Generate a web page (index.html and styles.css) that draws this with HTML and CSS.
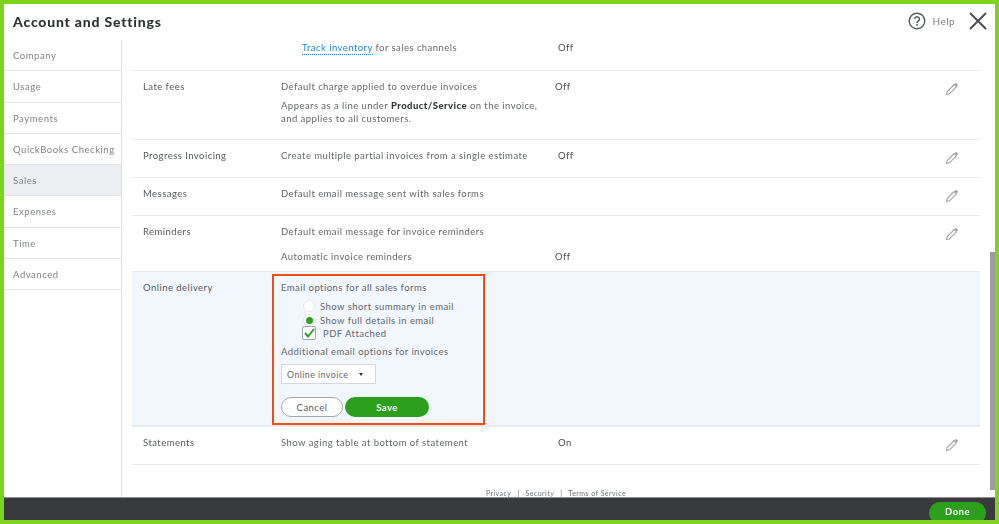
FILE: index.html
```html
<!DOCTYPE html>
<html lang="en">
<head>
<meta charset="utf-8">
<title>Account and Settings</title>
<link rel="stylesheet" href="styles.css">
</head>
<body>
<div class="frame">
  <header class="top">
    <h1 class="title">Account and Settings</h1>
    <div class="top-actions">
      <svg class="help-icon" width="18" height="18" viewBox="0 0 18 18"><circle cx="9" cy="9" r="7.8" fill="none" stroke="#555a60" stroke-width="1.4"/><path d="M6.6 7.1a2.4 2.4 0 1 1 3.6 2.1c-.8.5-1.2.9-1.2 1.7" fill="none" stroke="#555a60" stroke-width="1.4"/><circle cx="9" cy="13" r=".9" fill="#555a60"/></svg>
      <span class="help-text">Help</span>
      <svg class="close-icon" width="18" height="18" viewBox="0 0 18 18"><path d="M1 1l16 16M17 1L1 17" stroke="#4a4f55" stroke-width="2" fill="none"/></svg>
    </div>
  </header>
  <div class="main">
    <nav class="side">
      <div class="side-item">Company</div>
      <div class="side-item">Usage</div>
      <div class="side-item">Payments</div>
      <div class="side-item">QuickBooks Checking</div>
      <div class="side-item active">Sales</div>
      <div class="side-item">Expenses</div>
      <div class="side-item">Time</div>
      <div class="side-item">Advanced</div>
    </nav>
    <div class="content">
      <section class="row row-first">
        <div class="label"></div>
        <div class="desc indent"><a class="link">Track inventory</a> for sales channels</div>
        <div class="val val-r">Off</div>
      </section>
      <section class="row row-late">
        <div class="label">Late fees</div>
        <div class="desc">
          <p>Default charge applied to overdue invoices</p>
          <p class="sub">Appears as a line under <b>Product/Service</b> on the invoice,<br>and applies to all customers.</p>
        </div>
        <div class="val">Off</div>
        <svg class="pencil" width="14" height="14" viewBox="0 0 14 14"><path d="M1.5 12.5l.7-3L9.2 2.5l2.3 2.3-7 7z" fill="none" stroke="#a0a3a8" stroke-width="1.1"/><path d="M9.8 1.9l1.2-1 2 2-1 1.2z" fill="#85888e"/></svg>
      </section>
      <section class="row row-std">
        <div class="label">Progress Invoicing</div>
        <div class="desc">Create multiple partial invoices from a single estimate</div>
        <div class="val val-r">Off</div>
        <svg class="pencil" width="14" height="14" viewBox="0 0 14 14"><path d="M1.5 12.5l.7-3L9.2 2.5l2.3 2.3-7 7z" fill="none" stroke="#a0a3a8" stroke-width="1.1"/><path d="M9.8 1.9l1.2-1 2 2-1 1.2z" fill="#85888e"/></svg>
      </section>
      <section class="row row-std">
        <div class="label">Messages</div>
        <div class="desc">Default email message sent with sales forms</div>
        <div class="val"></div>
        <svg class="pencil" width="14" height="14" viewBox="0 0 14 14"><path d="M1.5 12.5l.7-3L9.2 2.5l2.3 2.3-7 7z" fill="none" stroke="#a0a3a8" stroke-width="1.1"/><path d="M9.8 1.9l1.2-1 2 2-1 1.2z" fill="#85888e"/></svg>
      </section>
      <section class="row row-rem">
        <div class="label">Reminders</div>
        <div class="desc">
          <p>Default email message for invoice reminders</p>
          <p class="sub-wide">Automatic invoice reminders</p>
        </div>
        <div class="val val-low">Off</div>
        <svg class="pencil" width="14" height="14" viewBox="0 0 14 14"><path d="M1.5 12.5l.7-3L9.2 2.5l2.3 2.3-7 7z" fill="none" stroke="#a0a3a8" stroke-width="1.1"/><path d="M9.8 1.9l1.2-1 2 2-1 1.2z" fill="#85888e"/></svg>
      </section>
      <section class="row row-edit">
        <div class="label">Online delivery</div>
        <form class="edit-box">
          <p class="edit-head">Email options for all sales forms</p>
          <div class="opt opt-first"><span class="radio"></span>Show short summary in email</div>
          <div class="opt"><span class="radio on"></span>Show full details in email</div>
          <div class="opt-check">
            <span class="check"><svg width="11" height="10" viewBox="0 0 11 10"><path d="M1 5l3 3.5L10 1" fill="none" stroke="#2ca01c" stroke-width="2"/></svg></span>PDF Attached
          </div>
          <p class="edit-head2">Additional email options for invoices</p>
          <div class="select">Online invoice<span class="caret"></span></div>
          <div class="btns">
            <span class="btn btn-cancel">Cancel</span>
            <span class="btn btn-save">Save</span>
          </div>
        </form>
      </section>
      <section class="row row-std">
        <div class="label">Statements</div>
        <div class="desc">Show aging table at bottom of statement</div>
        <div class="val val-r">On</div>
        <svg class="pencil" width="14" height="14" viewBox="0 0 14 14"><path d="M1.5 12.5l.7-3L9.2 2.5l2.3 2.3-7 7z" fill="none" stroke="#a0a3a8" stroke-width="1.1"/><path d="M9.8 1.9l1.2-1 2 2-1 1.2z" fill="#85888e"/></svg>
      </section>
      <div class="legal"><span>Privacy</span><i>|</i><span>Security</span><i>|</i><span>Terms of Service</span></div>
    </div>
    <div class="scroll"><div class="thumb"></div></div>
  </div>
  <footer class="bar"><span class="done">Done</span></footer>
</div>
</body>
</html>
```
FILE: styles.css
```css
* { box-sizing: border-box; }
html, body { margin: 0; padding: 0; }
body { width: 999px; height: 524px; overflow: hidden; background: #fff; font-family: Lato, "Liberation Sans", sans-serif; }
p { margin: 0; }
.frame { width: 999px; height: 524px; display: flex; flex-direction: column; border-style: solid; border-color: #7ed321; border-width: 4px; overflow: hidden; color: #63666b; font-size: 9.5px; letter-spacing: .45px; line-height: 13px; filter: blur(.3px); }
.top { height: 36px; flex: none; display: flex; align-items: center; justify-content: space-between; padding: 0 8px 0 9px; }
.title { margin: 0; font-size: 14px; font-weight: 900; color: #2f3338; letter-spacing: .8px; line-height: 18px; position: relative; }
.top-actions { display: flex; align-items: center; position: relative; top: -1px; }
.help-text { margin: 0 14px 0 6px; font-size: 10px; color: #7a7e84; }
.help-icon, .close-icon { display: block; }
.main { flex: 1; min-height: 0; display: flex; }
.side { width: 118px; flex: none; border-right: 1px solid #dfe0e2; }
.side-item { height: 31.3px; padding: 9px 0 0 9px; border-bottom: 1.5px solid #e3e4e6; color: #808388; letter-spacing: .55px; }
.side-item.active { background: #eceef1; }
.content { width: 859px; flex: none; padding: 0 0 0 10px; }
.row { display: flex; align-items: flex-start; width: 848px; border-bottom: 1.5px solid #e8e9eb; padding-top: 9px; position: relative; }
.label { width: 149px; flex: none; padding-left: 11px; color: #55585d; }
.desc { width: 274px; flex: none; }
.indent { padding-left: 21px; }
.val { width: 30px; flex: none; color: #4a4d52; }
.val-r { padding-left: 3px; }
.val-low { padding-top: 25px; }
.pencil { margin-left: auto; margin-right: 21px; margin-top: 2px; }
.row-first { height: 31px; padding-top: 1px; }
.row-late { height: 68.5px; }
.row-std { height: 38px; }
.row-rem { height: 56.5px; }
.row-edit { height: 155px; background: #f2f7fd; padding-top: 2px; border-bottom-width: 2px; }
.row-edit .label { padding-top: 7px; width: 140px; }
.sub { margin-top: 6px; }
.sub-wide { margin-top: 12px; }
b { color: #33363a; font-weight: 900; }
.link { color: #1a8ad8; border-bottom: 1px dotted #1a8ad8; padding-bottom: 1px; }
.edit-box { width: 213px; height: 151px; border: 2px solid #f04e14; padding: 5px 0 0 7px; }
.edit-head { color: #63666b; }
.opt { display: flex; align-items: center; height: 14px; padding-left: 22px; }
.opt-first { margin-top: 5px; }
.radio { width: 12px; height: 12px; border-radius: 50%; background: #fff; border: 1px solid #e4e6e9; margin-right: 5px; display: flex; align-items: center; justify-content: center; }
.radio.on::before { content: ""; width: 7px; height: 7px; border-radius: 50%; background: #2ca01c; }
.opt-check { display: flex; align-items: center; height: 12px; padding-left: 21px; }
.check { width: 14px; height: 14px; border: 1.5px solid #a3a6ab; border-radius: 2px; background: #fff; margin-right: 7px; display: flex; align-items: center; justify-content: center; }
.edit-head2 { margin-top: 6px; }
.select { width: 95px; height: 20px; margin-top: 6px; background: #fff; border: 1px solid #d4d7dc; padding: 3px 0 0 5px; display: flex; align-items: flex-start; font-size: 8.8px; }
.caret { margin: 5px 0 0 11px; border-style: solid; border-width: 3px 2.5px 0; border-color: #33363a transparent transparent; }
.btns { display: flex; gap: 2px; margin-top: 13px; }
.btn { height: 20px; border-radius: 10px; display: flex; align-items: center; justify-content: center; font-size: 9.5px; }
.btn-cancel { width: 62px; border: 1px solid #a3a6ab; background: #fff; color: #55585d; }
.btn-save { width: 84px; background: #2ca01c; color: #fff; font-weight: 700; }
.legal { display: flex; justify-content: center; gap: 6px; width: 848px; margin-top: 24px; font-size: 7px; line-height: 9px; letter-spacing: .45px; color: #6b6f75; }
.legal i { font-style: normal; }
.scroll { flex: 1; padding-top: 212px; }
.thumb { width: 5px; height: 238px; margin-left: 9px; background: #9b9da0; }
.bar { height: 23px; flex: none; background: #393a3d; border-top: 1.5px solid #8d8f92; display: flex; justify-content: flex-end; padding: 4px 9px 0 0; }
.done { width: 57px; height: 22px; flex: none; border-radius: 11px; background: #2ca01c; color: #fff; font-weight: 700; font-size: 9.5px; text-align: center; line-height: 20px; }
```
